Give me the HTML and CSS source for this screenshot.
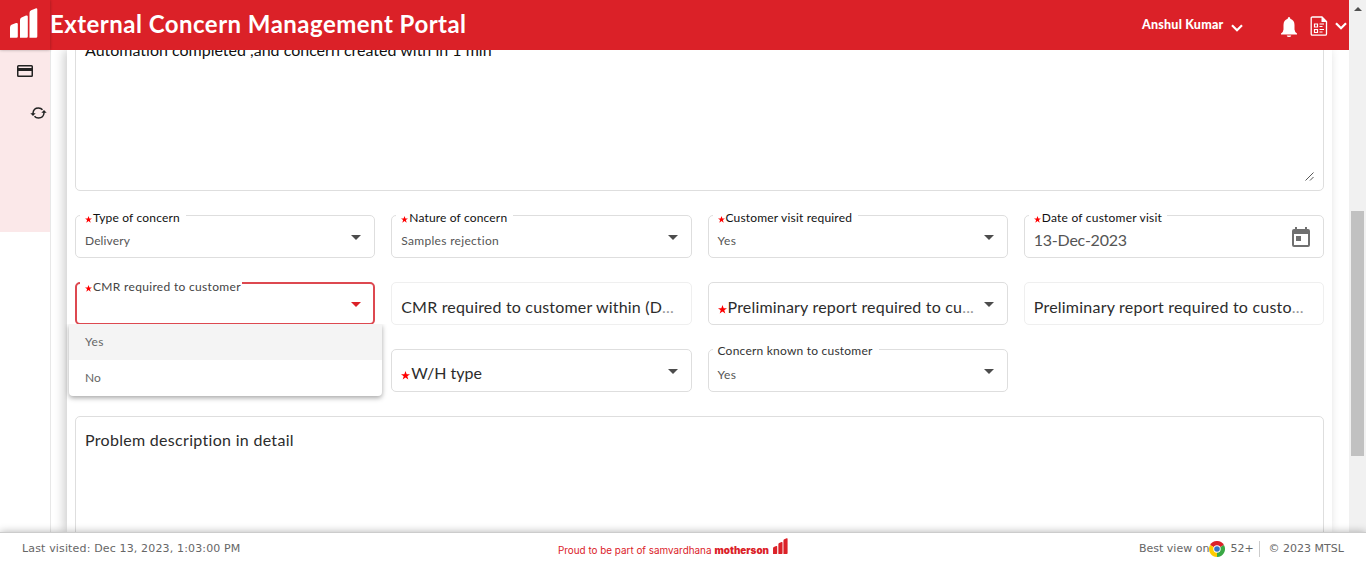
FILE: index.html
```
<!DOCTYPE html>
<html lang="en">
<head>
<meta charset="utf-8">
<title>External Concern Management Portal</title>
<link rel="stylesheet" href="styles.css">
</head>
<body>
<svg class="defs" width="0" height="0">
  <symbol id="star" viewBox="0 0 20 20"><path d="M10 0l2.6 7H20l-6 4.600L16.200 19 10 14.500 3.800 19 6 11.600 0 7h7.400z" fill="#f00"/></symbol>
  <symbol id="bars" viewBox="0 0 28 30"><path d="M0 19.500q0-2 1.500-2.800L6 15q1.800-.5 1.800 1V28.500q0 1.300-1.300 1.300H0zM10 12q0-1.800 1.500-2.600L16 7.600q1.800-.5 1.800 1V28.500q0 1.300-1.300 1.300H10zM19.500 5q0-2 1.700-2.700L25.500.4Q27.300-.2 27.300 1.400V28.500q0 1.300-1.300 1.300h-6.500z" fill="currentColor"/></symbol>
</svg>
<div class="view">
  <div class="app">
    <header class="header">
      <div class="brand"><svg class="logo" width="28" height="30"><use href="#bars"/></svg></div>
      <h1 class="title"><span>External Concern Management Portal</span></h1>
      <span class="user">Anshul Kumar</span>
      <svg class="chev-user" width="12" height="8" viewBox="0 0 12 8"><path d="M1 1.200l5 5 5-5" fill="none" stroke="#fff" stroke-width="2.200"/></svg>
      <svg class="bell" width="16" height="20" viewBox="0 0 16 20"><path d="M8 0q1.300 0 1.300 1.700Q13.500 3 13.500 8v4.500q0 2 2.500 4V17.500H0v-1q2.500-2 2.500-4V8q0-5 4.200-6.300Q6.700 0 8 0zM5.700 18.500h4.600Q10 20 8 20t-2.300-1.500z" fill="#fff"/></svg>
      <svg class="doc" width="18" height="20" viewBox="0 0 18 20"><path d="M2.500 1H12l4.500 4.500V18q0 1.200-1.200 1.200H2.500Q1.200 19.200 1.200 18V2.200Q1.200 1 2.500 1z" fill="none" stroke="#fff" stroke-width="1.300"/><path d="M11.500.5V6H17z" fill="#fff"/><path d="M4.500 8h3v3h-3zM4.500 13.500h3v3h-3z" fill="none" stroke="#fff" stroke-width="1.200"/><path d="M9.500 8H14M9.500 10.500h3M9.500 13.500H14M9.500 16h3" stroke="#fff" stroke-width="1.200"/></svg>
      <svg class="chev-doc" width="12" height="8" viewBox="0 0 12 8"><path d="M1 1.200l5 5 5-5" fill="none" stroke="#fff" stroke-width="2.200"/></svg>
    </header>
    <div class="body">
      <nav class="side"><div class="side-menu">
        <svg class="ic-card" width="16" height="12" viewBox="0 0 16 12"><path d="M1.500 0h13Q16 0 16 1.500v9q0 1.500-1.500 1.500h-13Q0 12 0 10.500v-9Q0 0 1.500 0zM1.500 1.500V3h13V1.500zM1.500 6v4.500h13V6z" fill="#222" fill-rule="evenodd"/></svg>
        <svg class="ic-sync" width="17" height="12" viewBox="0 0 17 12"><path d="M3 7V6Q3.500 1 8.500 1q2.500 0 4 1.800M14 5v1q-.5 5-5.500 5-2.500 0-4-1.800" fill="none" stroke="#222" stroke-width="1.500"/><path d="M.3 6.300h5.400L3 9zM11.300 5.700h5.400L14 3z" fill="#222"/></svg>
      </div></nav>
      <main class="card">
        <div class="area area-top"><p class="t-auto">Automation completed ,and concern created with in 1 min</p>
          <svg class="grip" width="9" height="9" viewBox="0 0 9 9"><path d="M.5 8.500l8-8M5 8.500L8.500 5" stroke="#444" fill="none" stroke-width=".9"/></svg></div>
        <div class="grid">
          <div class="field"><label class="label wide"><svg class="s"><use href="#star"/></svg><span class="l1">Type of concern</span></label><span class="value v1">Delivery</span><i class="arrow"></i></div>
          <div class="field"><label class="label wide"><svg class="s"><use href="#star"/></svg><span class="l2">Nature of concern</span></label><span class="value v2">Samples rejection</span><i class="arrow"></i></div>
          <div class="field"><label class="label wide"><svg class="s"><use href="#star"/></svg><span class="l3">Customer visit required</span></label><span class="value v3">Yes</span><i class="arrow"></i></div>
          <div class="field"><label class="label"><svg class="s"><use href="#star"/></svg><span class="l4">Date of customer visit</span></label><span class="value date">13-Dec-2023</span>
            <svg class="cal" width="18" height="20" viewBox="0 0 18 20"><path d="M3 0h2v2h8V0h2v2h1q2 0 2 2v14q0 2-2 2H2q-2 0-2-2V4q0-2 2-2h1zM2 7v11h14V7zM4 9h5v5H4z" fill="#707070" fill-rule="evenodd"/></svg></div>
          <div class="field active"><label class="label low"><svg class="s"><use href="#star"/></svg><span class="l5">CMR required to customer</span></label><i class="arrow"></i>
            <div class="menu"><div class="item on v3">Yes</div><div class="item">No</div></div></div>
          <div class="field off"><span class="big b1">CMR required to customer within (D<em>...</em></span></div>
          <div class="field"><span class="big"><svg class="s"><use href="#star"/></svg><span class="b2">Preliminary report required to cu<em>...</em></span></span><i class="arrow"></i></div>
          <div class="field off"><span class="big b3">Preliminary report required to custo<em>...</em></span></div>
          <div></div>
          <div class="field"><span class="big up"><svg class="s"><use href="#star"/></svg><span>W/H type</span></span><i class="arrow"></i></div>
          <div class="field"><label class="label wide known"><span class="l6">Concern known to customer</span></label><span class="value v3">Yes</span><i class="arrow"></i></div>
        </div>
        <div class="area area-bottom"><p class="b5">Problem description in detail</p></div>
      </main>
    </div>
  </div>
  <div class="scroll"><i class="up-arrow"></i><div class="thumb"></div></div>
</div>
<footer class="footer">
  <span class="visited">Last visited: Dec 13, 2023, 1:03:00 PM</span>
  <span class="proud"><span>Proud to be part of samvardhana</span><b>motherson</b><svg width="15" height="16" viewBox="0 0 28 30"><use href="#bars"/></svg></span>
  <span class="best"><span>Best view on</span><svg width="16" height="16" viewBox="0 0 16 16"><path d="M8 8L1.070 4A8 8 0 0 1 14.930 4z" fill="#db2128"/><path d="M8 8L1.070 4A8 8 0 0 0 8 16z" fill="#fc0"/><path d="M8 8l6.930-4A8 8 0 0 1 8 16z" fill="#3aa845"/><circle cx="8" cy="8" r="3.700" fill="#fff"/><circle cx="8" cy="8" r="2.800" fill="#3274c8"/></svg><span>52+</span><span class="mtsl">© 2023 MTSL</span></span>
</footer>
</body>
</html>
```
FILE: styles.css
```
* { box-sizing: border-box; }
body { margin: 0; width: 1366px; height: 562px; overflow: hidden; background: #fff; font-family: Lato, sans-serif; color: #2c2c2c; display: flex; flex-direction: column; }
.defs { display: block; flex: none; position: absolute; }
svg { display: block; flex: none; }
h1, p { margin: 0; }
span, p, label, .item { white-space: nowrap; }
.view { height: 532px; flex: none; display: flex; overflow: hidden; }
.app { width: 1349px; display: flex; flex-direction: column; }
.header { height: 50px; flex: none; background: #db2128; color: #fff; display: flex; align-items: flex-start; position: relative; z-index: 2; }
.brand { width: 50px; height: 50px; padding: 8px 0 0 10px; box-shadow: 0 0 3px rgba(0,0,0,.3); }
.title { width: 1092px; font-size: 24px; line-height: 30px; font-weight: 700; padding-top: 9px; letter-spacing: .47px; }
.user { width: 89px; font-size: 12.5px; font-weight: 900; line-height: 16px; margin-top: 17px; letter-spacing: .22px; }
.chev-user { margin-top: 24px; }
.bell { margin: 17px 0 0 38px; }
.doc { margin: 16px 0 0 13px; }
.chev-doc { margin: 22px 0 0 7px; }
.body { height: 482px; display: flex; overflow: hidden; }
.side { width: 51px; flex: none; border-right: 1px solid #e8e8e8; }
.side-menu { width: 50px; height: 182px; background: #fbe8e9; padding-top: 15px; }
.ic-card { margin-left: 17px; }
.ic-sync { margin: 30px 0 0 30px; }
.card { width: 1265px; margin-left: 16px; padding: 0 8px; box-shadow: -3px 0 10px rgba(0,0,0,.2); flex: none; }
.area { border: 1px solid #dedede; border-radius: 5px; padding: 0 9px; font-size: 16px; position: relative; }
.area-top { height: 191px; margin-top: -50px; padding-top: 39px; color: #111; line-height: 20px; }
.t-auto { font-variant-ligatures: none; }
.grip { position: absolute; right: 9px; bottom: 9px; }
.grid { display: grid; grid-template-columns: repeat(4, 1fr); grid-auto-rows: 43px; column-gap: 16px; row-gap: 24px; margin: 24px 0; }
.field { border: 1px solid #dedede; border-radius: 5px; position: relative; padding: 0 13px 0 9px; display: flex; min-width: 0; }
.off { border-color: #efefef; }
.active { border: 2px solid #dd4850; padding: 0 12px 0 8px; }
.label { position: absolute; left: 4px; top: -6px; height: 16px; line-height: 16px; padding: 0 5px; background: #fff; font-size: 12px; display: flex; align-items: center; color: #111; }
.wide { padding-right: 6px; }
.label .s { width: 7px; height: 7px; margin: 2px 1px 0 0; }
.low { left: 3px; top: -5px; padding-right: 1px; color: #444; }
.known { top: -7px; color: #333; }
.l1 { letter-spacing: .18px; }
.l2 { letter-spacing: .16px; }
.l3 { letter-spacing: .18px; }
.l4 { letter-spacing: .22px; }
.l5 { letter-spacing: .32px; }
.l6 { letter-spacing: .22px; }
.value { font-size: 12px; line-height: 16px; margin-top: 17px; color: #555; }
.v1 { letter-spacing: .12px; }
.v2 { letter-spacing: .31px; }
.v3 { letter-spacing: .4px; }
.date { font-size: 16px; line-height: 20px; margin-top: 14px; letter-spacing: -.23px; }
.arrow { margin: 19px 0 0 auto; width: 0; height: 0; border: 5px solid transparent; border-top-color: #4c4c4c; border-bottom: 0; }
.active .arrow { margin-top: 18px; border-top-color: #db2128; }
.cal { margin: 11px 0 0 auto; }
.big { font-size: 16px; line-height: 20px; margin-top: 14px; display: flex; }
.big.up { margin-top: 13px; }
.big .s { width: 9px; height: 9px; margin: 8px 1px 0 0; }
.b1 { letter-spacing: .18px; }
.b2 { letter-spacing: .19px; }
.b3 { letter-spacing: .22px; }
.b5 { letter-spacing: .3px; }
em { font-style: normal; color: #999; }
.menu { position: absolute; left: -8px; top: 40px; width: 313px; background: #fff; border-radius: 0 0 4px 4px; box-shadow: 0 2px 5px rgba(0,0,0,.35); z-index: 3; clip-path: inset(0 -8px -8px -8px); }
.item { height: 36px; line-height: 36px; padding-left: 16px; font-size: 12px; color: #666; }
.on { background: #f4f4f4; }
.area-bottom { height: 160px; padding-top: 13px; line-height: 20px; }
.scroll { width: 17px; background: #f1f1f1; }
.up-arrow { display: block; width: 0; height: 0; margin: 7px 0 0 5px; border: 4px solid transparent; border-bottom-color: #505050; border-top: 0; }
.thumb { width: 13px; height: 245px; margin: 200px 0 0 2px; background: #c1c1c1; }
.footer { height: 30px; background: #fff; border-top: 1px solid #ccc; box-shadow: 0 0 8px rgba(0,0,0,.3); position: relative; z-index: 4; display: flex; font: 11px/14px "DejaVu Sans", sans-serif; color: #666; padding: 9px 22px 0; }
.visited { width: 536px; letter-spacing: .15px; }
.proud { width: 581px; display: flex; color: #db2128; font: 9.9px/14px Inter, sans-serif; padding-top: 1px; }
.proud b { margin: 0 4px 0 3px; font-weight: 900; }
.proud svg { margin-top: -5px; }
.best { display: flex; }
.best svg { margin: -1px 5px 0 0; }
.mtsl { border-left: 1px solid #ccc; margin: -1px 0 0 5px; padding: 1px 0 0 9px; height: 16px; }
```
